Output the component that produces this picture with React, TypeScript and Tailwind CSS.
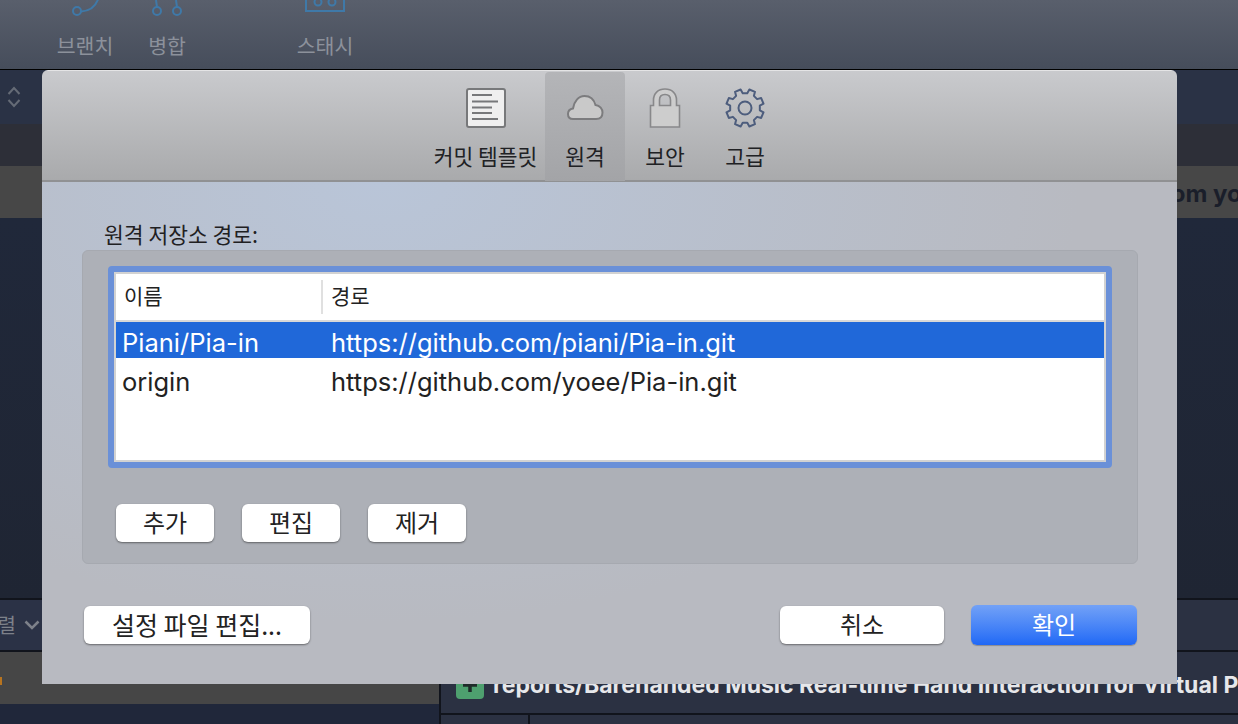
import React from 'react';

const cjk = "font-['Noto_Sans_CJK_KR','Noto_Sans',sans-serif]";

// gear outline with 8 teeth, centred on 20,20
const gearPath = () => {
  const pts: string[] = [];
  for (let i = 0; i < 8; i++) {
    const a = (i * Math.PI) / 4 - Math.PI / 8;
    const at = (r: number, d: number) =>
      `${(20 + r * Math.cos(a + d)).toFixed(2)} ${(20 + r * Math.sin(a + d)).toFixed(2)}`;
    pts.push(at(15, -0.24), at(19, -0.16), at(19, 0.16), at(15, 0.24));
  }
  return 'M' + pts.join('L') + 'Z';
};

const DocIcon = () => (
  <svg width="40" height="40" viewBox="0 0 40 40">
    <rect x="1" y="1" width="38" height="38" rx="2" fill="#efefef" stroke="#77787a" strokeWidth="2" />
    <path d="M6 7h20M6 13.500h26M6 19.500h20M6 25h20M6 31h26" stroke="#77787a" strokeWidth="1.800" />
  </svg>
);

const CloudIcon = () => (
  <svg width="40" height="40" viewBox="0 0 40 40">
    <path
      d="M8 31C4.500 31 3 28.500 3 26C3 23 5 21 8 20.500C9 13.500 13.500 8 19.500 8C25 8 29 11.500 30.500 17C35 17.500 37.500 21 37.500 24.500C37.500 28.500 35 31 31 31Z"
      fill="#c9c9c9"
      stroke="#7c7c7e"
      strokeWidth="2"
    />
  </svg>
);

const LockIcon = () => (
  <svg width="40" height="40" viewBox="0 0 40 40">
    <path
      d="M5.500 39V17.500H8.500V12C8.500 5.500 13 1 20 1S31.500 5.500 31.500 12V17.500H34.500V39ZM14.500 17.500H25.500V12C25.500 8.500 23.500 6.500 20 6.500S14.500 8.500 14.500 12Z"
      fill="#cdcdcd"
      fillRule="evenodd"
      stroke="#88888a"
      strokeWidth="1.600"
    />
  </svg>
);

const GearIcon = () => (
  <svg width="40" height="40" viewBox="0 0 40 40">
    <path d={gearPath()} fill="none" stroke="#4d5d7d" strokeWidth="2" strokeLinejoin="round" />
    <circle cx="20" cy="20" r="6.500" fill="none" stroke="#4d5d7d" strokeWidth="2" />
  </svg>
);

const Tab: React.FC<{ label: string; active?: boolean; wide?: boolean; children: React.ReactNode }> = ({
  label,
  active,
  wide,
  children,
}) => (
  <div
    className={`flex flex-col items-center pt-[16px] h-[109px] rounded-t-[4px] ${wide ? 'w-[115px] pr-[4px]' : 'w-[80px]'} ${
      active ? 'bg-gradient-to-b from-[#b4b5b8] to-[#a3a4a7]' : ''
    }`}
  >
    <div className="h-[40px]">{children}</div>
    <div className={`mt-[14px] text-[21.500px] leading-[28px] text-[#202124] whitespace-nowrap ${cjk}`}>{label}</div>
  </div>
);

const SmallButton: React.FC<{ label: string }> = ({ label }) => (
  <button className={`w-[98px] h-[38px] pb-[3px] rounded-[6px] bg-white text-[#222] text-[24px] leading-[32px] shadow-[0_1px_2px_rgba(0,0,0,0.45)] ${cjk}`}>
    {label}
  </button>
);

const Dialog = () => (
  <div className="absolute left-[42px] top-[70px] w-[1135px] h-[614px] rounded-t-[6px] overflow-hidden flex flex-col">
    <div className="h-[112px] shrink-0 border-t border-[#e4e4e5] border-b-2 border-b-[#909193] bg-gradient-to-b from-[#c9cacd] to-[#a9aaac] flex pl-[388px] pt-[1px]">
      <Tab label="커밋 템플릿" wide>
        <DocIcon />
      </Tab>
      <Tab label="원격" active>
        <CloudIcon />
      </Tab>
      <Tab label="보안">
        <LockIcon />
      </Tab>
      <Tab label="고급">
        <GearIcon />
      </Tab>
    </div>

    <div className="flex-1 bg-[radial-gradient(ellipse_at_30%_0%,#b9c5d8,#b8bac1_62%)] pt-[40px]">
      <div className={`ml-[62px] h-[24px] text-[21.500px] leading-[24px] text-[#1f2022] ${cjk}`}>원격 저장소 경로:</div>
      <div className="mt-[4px] ml-[40px] mr-[39px] h-[314px] rounded-[6px] bg-[#adb0b7] border border-[#a6a9b0] pt-[15px] px-[25px]">
        <div className="h-[202px] rounded-[4px] border-[6px] border-[#6a90d8]">
          <div className="h-full border-2 border-[#d2d2d2] bg-white">
            <div className={`flex items-start pt-[6px] h-[48px] border-b-2 border-[#d8d8d8] text-[21px] text-[#222] ${cjk}`}>
              <div className="w-[207px] pl-[8px] h-[34px] leading-[30px] border-r-2 border-[#e0e0e0]">이름</div>
              <div className="pl-[8px] leading-[30px]">경로</div>
            </div>
            <div className="flex h-[36px] bg-[#2068d9] text-white text-[25.500px] leading-[42px] font-['Inter',sans-serif] whitespace-nowrap">
              <div className="w-[215px] pl-[6px]">Piani/Pia-in</div>
              <div>https://github.com/piani/Pia-in.git</div>
            </div>
            <div className="flex h-[36px] mt-[3px] text-[#222] text-[25.500px] leading-[42px] font-['Inter',sans-serif] whitespace-nowrap">
              <div className="w-[215px] pl-[6px]">origin</div>
              <div>https://github.com/yoee/Pia-in.git</div>
            </div>
          </div>
        </div>
        <div className="mt-[36px] ml-[8px] flex gap-[28px]">
          <SmallButton label="추가" />
          <SmallButton label="편집" />
          <SmallButton label="제거" />
        </div>
      </div>

      <div className="mt-[41px] pl-[42px] pr-[40px] flex items-center">
        <button className={`w-[226px] h-[38px] pb-[3px] rounded-[6px] bg-white text-[#222] text-[25px] leading-[32px] whitespace-nowrap shadow-[0_1px_2px_rgba(0,0,0,0.45)] ${cjk}`}>
          설정 파일 편집...
        </button>
        <div className="flex-1" />
        <button className={`w-[164px] h-[38px] pb-[3px] rounded-[6px] bg-white text-[#222] text-[24px] leading-[32px] shadow-[0_1px_2px_rgba(0,0,0,0.45)] ${cjk}`}>
          취소
        </button>
        <button className={`ml-[27px] w-[166px] h-[40px] pb-[3px] rounded-[6px] bg-gradient-to-b from-[#72a1f6] to-[#1f68f6] text-white text-[24px] leading-[32px] shadow-[0_1px_1px_rgba(0,0,0,0.25)] ${cjk}`}>
          확인
        </button>
      </div>
    </div>
  </div>
);

const ToolbarItem: React.FC<{ label: string; width: string; children: React.ReactNode }> = ({ label, width, children }) => (
  <div className={`flex flex-col items-center ${width}`}>
    <div className="h-[17px]">{children}</div>
    <div className={`mt-[15px] text-[20.500px] leading-[26px] text-[#8c919b] ${cjk}`}>{label}</div>
  </div>
);

export default function App() {
  return (
    <div className="relative w-[1238px] h-[724px] overflow-hidden bg-[#20263a] flex flex-col">
      <div className="h-[70px] shrink-0 border-b border-black bg-gradient-to-b from-[#595f6c] to-[#464d5b] flex pl-[45px] overflow-hidden">
        <ToolbarItem label="브랜치" width="w-[80px]">
          <svg width="30" height="17" viewBox="0 0 30 17" fill="none" stroke="#3f79a8" strokeWidth="2">
            <circle cx="7" cy="11" r="4" />
            <path d="M11 11.500c8-.5 14-4 17-12" />
          </svg>
        </ToolbarItem>
        <ToolbarItem label="병합" width="w-[84px]">
          <svg width="32" height="17" viewBox="0 0 32 17" fill="none" stroke="#3f79a8" strokeWidth="2">
            <circle cx="6" cy="11" r="4" />
            <circle cx="26" cy="11" r="4" />
            <path d="M6 7l-1-7M26 7l-1-7" />
          </svg>
        </ToolbarItem>
        <div className="w-[74px]" />
        <ToolbarItem label="스태시" width="w-[84px]">
          <svg width="50" height="17" viewBox="0 0 50 17" fill="none" stroke="#3f79a8" strokeWidth="2">
            <path d="M6 0v11h38V0" />
            <circle cx="18" cy="2" r="3.500" />
            <circle cx="32" cy="2" r="3.500" />
          </svg>
        </ToolbarItem>
      </div>

      <div className="h-[54px] shrink-0 bg-[#2a3245] flex items-center pl-[7px]">
        <svg width="14" height="22" viewBox="0 0 14 22" fill="none" stroke="#656b76" strokeWidth="2">
          <path d="M1.500 8l5.500-6 5.500 6M1.500 14l5.500 6 5.500-6" />
        </svg>
      </div>
      <div className="h-[42px] shrink-0 bg-[#2d2f38]" />
      <div className="h-[52px] shrink-0 bg-[#474747] pl-[1152px] pt-[4px] flex items-center overflow-hidden whitespace-nowrap text-[24px] font-bold text-[#1a1e2a] font-['Inter',sans-serif]">
        from your
      </div>
      <div className="h-[382px] shrink-0 bg-gradient-to-b from-[#20283a] to-[#1f2533] border-b-2 border-[#11141c]" />

      <div className="flex-1 flex min-h-0">
        <div className="w-[439px] shrink-0 flex flex-col">
          <div className="h-[50px] shrink-0 bg-[#2b3246] flex items-center text-[#7d818a] whitespace-nowrap">
            <span className={`text-[20px] -ml-[21px] ${cjk}`}>정렬</span>
            <svg className="ml-[8px] shrink-0" width="16" height="10" viewBox="0 0 16 10" fill="none" stroke="#7d818a" strokeWidth="2.500">
              <path d="M1.500 1.500l6.500 6.500 6.500-6.500" />
            </svg>
          </div>
          <div className="h-[2px] shrink-0 bg-[#11141c]" />
          <div className="h-[52px] shrink-0 bg-[#464646] flex items-center">
            <div className="w-[2px] h-[8px] mt-[6px] bg-[#b8741f]" />
          </div>
          <div className="flex-1 bg-[#20273a]" />
        </div>
        <div className="w-[2px] shrink-0 bg-[#11141c]" />
        <div className="flex-1 flex flex-col min-w-0">
          <div className="h-[50px] shrink-0 bg-[#2b3142]" />
          <div className="h-[2px] shrink-0 bg-[#11141c]" />
          <div className="h-[61px] shrink-0 bg-[#2b3142] flex items-center pl-[15px] overflow-hidden whitespace-nowrap">
            <div className="w-[28px] h-[28px] shrink-0 rounded-[4px] bg-[#4ea06f] flex items-center justify-center mt-[4px]">
              <svg width="16" height="16" viewBox="0 0 16 16" stroke="#1f2b2a" strokeWidth="3.500">
                <path d="M8 1v14M1 8h14" />
              </svg>
            </div>
            <span className="ml-[9px] text-[23px] leading-[28px] mt-[4px] font-bold text-[#e6e7ea] font-['Inter',sans-serif]">
              reports/Barehanded Music Real-time Hand Interaction for Virtual Piano
            </span>
          </div>
          <div className="h-[2px] shrink-0 bg-[#11141c]" />
          <div className="flex-1 bg-[#2b3142] flex">
            <div className="w-[89px] border-r-2 border-[#11141c]" />
          </div>
        </div>
      </div>

      <Dialog />
    </div>
  );
}
